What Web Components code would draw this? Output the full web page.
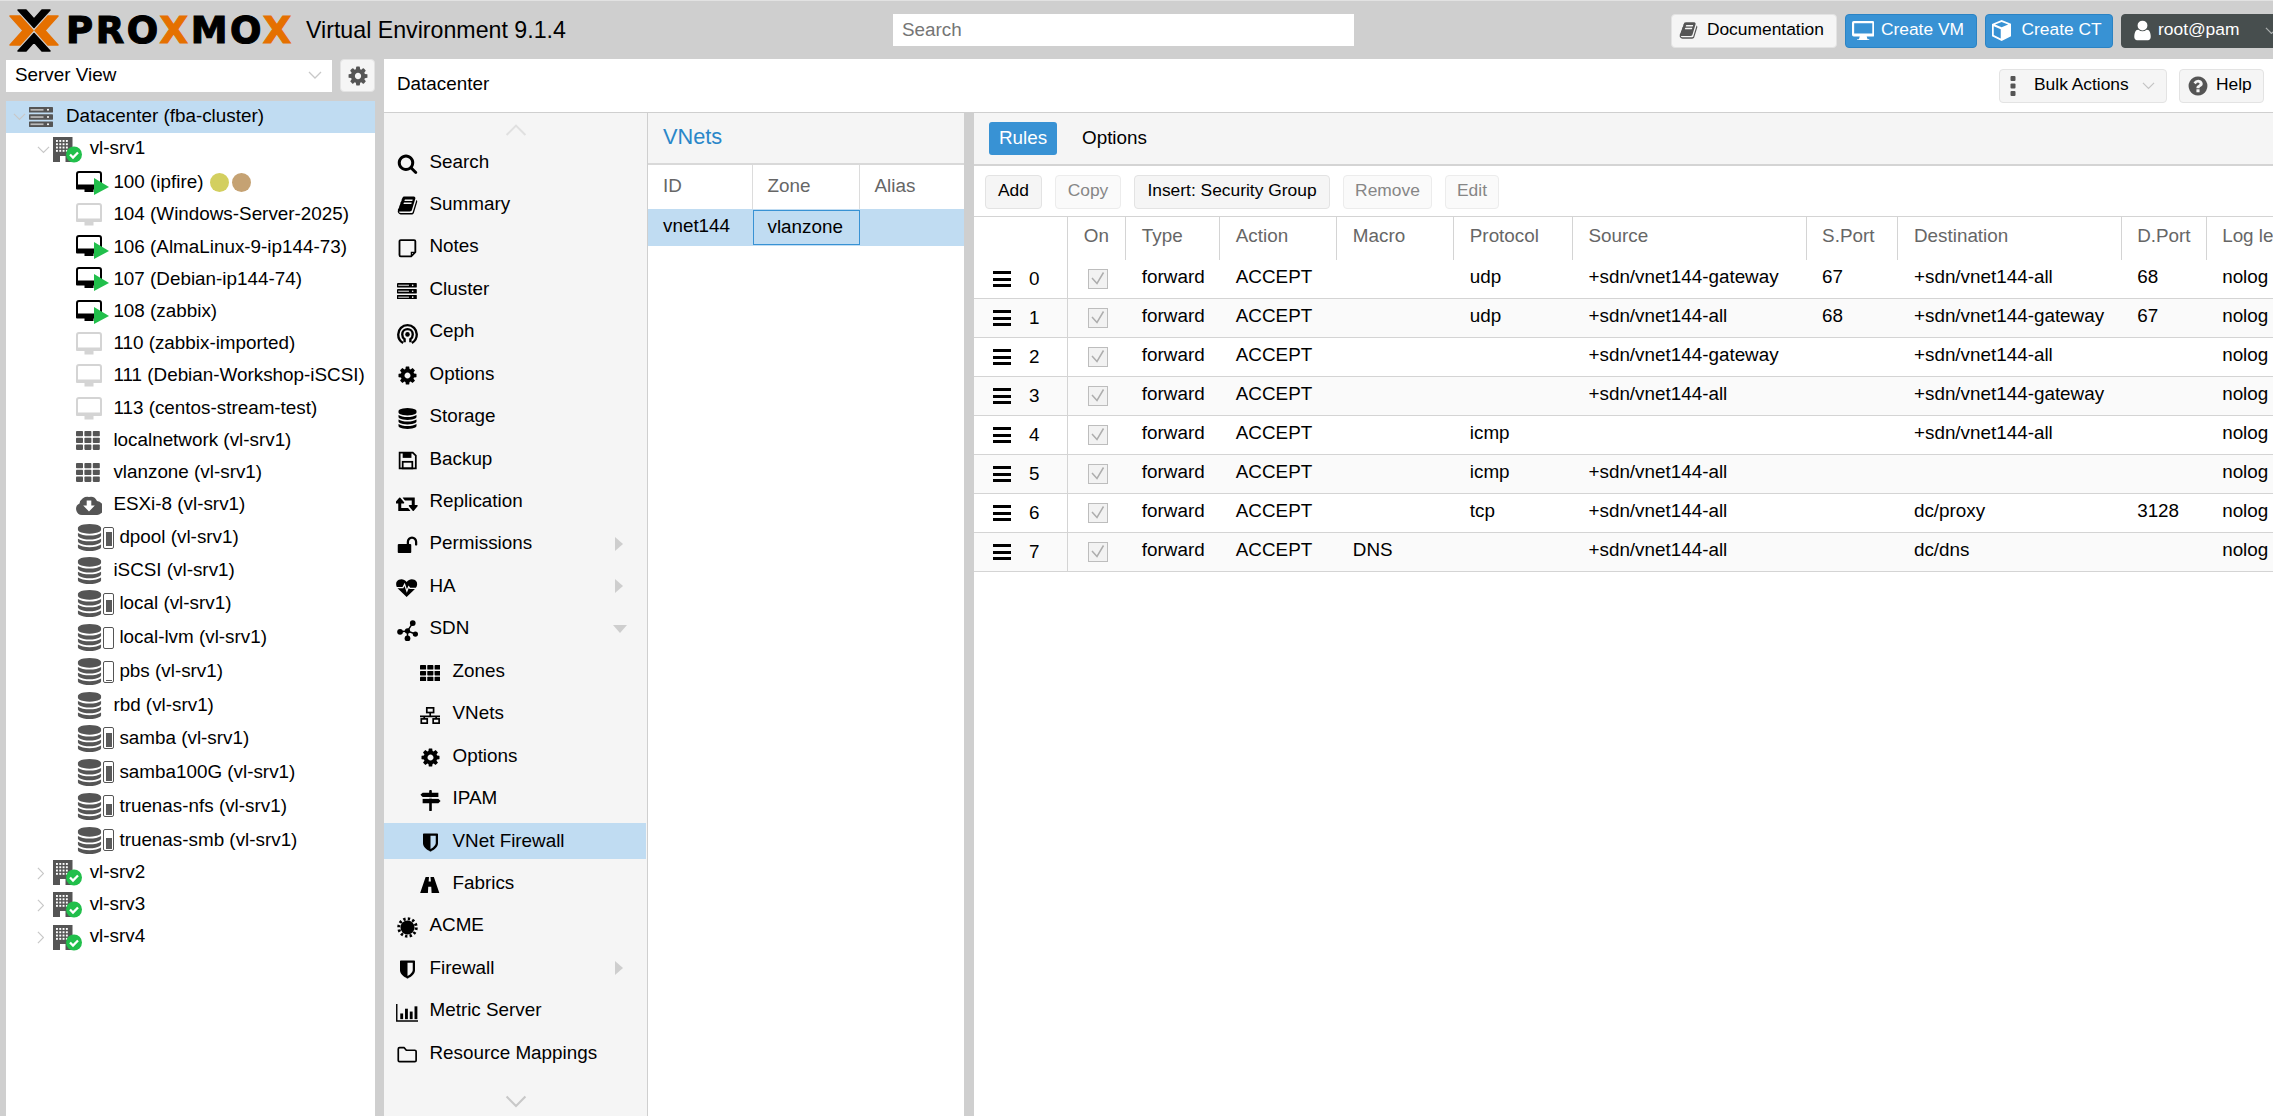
<!DOCTYPE html>
<html>
<head>
<meta charset="utf-8">
<title>Proxmox Virtual Environment</title>
<style>
  html, body { margin: 0; height: 100%; overflow: hidden; }
  body { font: 18.85px "Liberation Sans", Arial, sans-serif; color: #000; background: #cfcfcf; }
</style>
</head>
<body>
<px-app>
  <px-topbar slot="top">
    <px-button icon="book" icon-color="#555" style="--w:165.5px;--pl:6.5px;--ib:28.4px;--ih:19px">Documentation</px-button>
    <px-button variant="primary" icon="desktop" style="--w:132px;--pl:6px;--ib:29.4px;--ih:19px">Create VM</px-button>
    <px-button variant="primary" icon="cube" style="--w:128.5px;--pl:6px;--ib:30px;--ih:21px">Create CT</px-button>
    <px-button variant="dark" icon="user" menu style="--w:160px;--pl:8.5px;--ib:27.5px;--ih:23px;--mr:10px">root@pam</px-button>
  </px-topbar>

  <px-sidebar slot="left">
    <px-tree-row slot="tree" selected level="0" icon="datacenter" expander="open">Datacenter (fba-cluster)</px-tree-row>
    <px-tree-row slot="tree" level="1" icon="node" expander="open" style="--h:33.5px">vl-srv1</px-tree-row>
    <px-tree-row slot="tree" level="2" icon="vm-on" tags="#d3cf5f,#c5a273">100 (ipfire)</px-tree-row>
    <px-tree-row slot="tree" level="2" icon="vm-off">104 (Windows-Server-2025)</px-tree-row>
    <px-tree-row slot="tree" level="2" icon="vm-on">106 (AlmaLinux-9-ip144-73)</px-tree-row>
    <px-tree-row slot="tree" level="2" icon="vm-on">107 (Debian-ip144-74)</px-tree-row>
    <px-tree-row slot="tree" level="2" icon="vm-on">108 (zabbix)</px-tree-row>
    <px-tree-row slot="tree" level="2" icon="vm-off">110 (zabbix-imported)</px-tree-row>
    <px-tree-row slot="tree" level="2" icon="vm-off">111 (Debian-Workshop-iSCSI)</px-tree-row>
    <px-tree-row slot="tree" level="2" icon="vm-off">113 (centos-stream-test)</px-tree-row>
    <px-tree-row slot="tree" level="2" icon="th" icon-color="#555">localnetwork (vl-srv1)</px-tree-row>
    <px-tree-row slot="tree" level="2" icon="th" icon-color="#555">vlanzone (vl-srv1)</px-tree-row>
    <px-tree-row slot="tree" level="2" icon="cloud-download" icon-color="#555">ESXi-8 (vl-srv1)</px-tree-row>
    <px-tree-row slot="tree" level="2" icon="database" usage="0.82">dpool (vl-srv1)</px-tree-row>
    <px-tree-row slot="tree" level="2" icon="database">iSCSI (vl-srv1)</px-tree-row>
    <px-tree-row slot="tree" level="2" icon="database" usage="0.75">local (vl-srv1)</px-tree-row>
    <px-tree-row slot="tree" level="2" icon="database" usage="0">local-lvm (vl-srv1)</px-tree-row>
    <px-tree-row slot="tree" level="2" icon="database" usage="0.04">pbs (vl-srv1)</px-tree-row>
    <px-tree-row slot="tree" level="2" icon="database">rbd (vl-srv1)</px-tree-row>
    <px-tree-row slot="tree" level="2" icon="database" usage="0.82">samba (vl-srv1)</px-tree-row>
    <px-tree-row slot="tree" level="2" icon="database" usage="0.85">samba100G (vl-srv1)</px-tree-row>
    <px-tree-row slot="tree" level="2" icon="database" usage="0.6">truenas-nfs (vl-srv1)</px-tree-row>
    <px-tree-row slot="tree" level="2" icon="database" usage="0.6">truenas-smb (vl-srv1)</px-tree-row>
    <px-tree-row slot="tree" level="1" icon="node" expander="closed">vl-srv2</px-tree-row>
    <px-tree-row slot="tree" level="1" icon="node" expander="closed">vl-srv3</px-tree-row>
    <px-tree-row slot="tree" level="1" icon="node" expander="closed">vl-srv4</px-tree-row>
  </px-sidebar>

  <px-content slot="main">
    <px-button slot="actions" icon="ellipsis" icon-color="#555" menu style="--w:168.5px;--pl:10.5px;--ib:24px;--ih:20px;--mr:11px;--chev:#c4c4c4">Bulk Actions</px-button>
    <px-button slot="actions" icon="question" icon-color="#555" style="--w:85px;--pl:7px;--ib:29px;--ih:22px">Help</px-button>

    <px-nav slot="nav">
      <px-nav-item icon="search">Search</px-nav-item>
      <px-nav-item icon="book">Summary</px-nav-item>
      <px-nav-item icon="note">Notes</px-nav-item>
      <px-nav-item icon="server">Cluster</px-nav-item>
      <px-nav-item icon="ceph">Ceph</px-nav-item>
      <px-nav-item icon="gear">Options</px-nav-item>
      <px-nav-item icon="database">Storage</px-nav-item>
      <px-nav-item icon="floppy">Backup</px-nav-item>
      <px-nav-item icon="retweet">Replication</px-nav-item>
      <px-nav-item icon="unlock" arrow="right">Permissions</px-nav-item>
      <px-nav-item icon="heartbeat" arrow="right">HA</px-nav-item>
      <px-nav-item icon="sdn" arrow="down">SDN</px-nav-item>
      <px-nav-item sub icon="th">Zones</px-nav-item>
      <px-nav-item sub icon="sitemap">VNets</px-nav-item>
      <px-nav-item sub icon="gear">Options</px-nav-item>
      <px-nav-item sub icon="signs">IPAM</px-nav-item>
      <px-nav-item sub selected icon="shield">VNet Firewall</px-nav-item>
      <px-nav-item sub icon="road">Fabrics</px-nav-item>
      <px-nav-item icon="certificate">ACME</px-nav-item>
      <px-nav-item icon="shield" arrow="right">Firewall</px-nav-item>
      <px-nav-item icon="chart">Metric Server</px-nav-item>
      <px-nav-item icon="folder">Resource Mappings</px-nav-item>
    </px-nav>

    <px-vnet-panel slot="list"></px-vnet-panel>
    <px-rules-panel slot="detail"></px-rules-panel>
  </px-content>
</px-app>

<script>
const fa = d => ({ vb: "0 0 1792 1792", body: `<path fill="currentColor" d="${d}"/>` });
const ICONS = {
  gear: fa("M1152 896q0-106-75-181t-181-75-181 75-75 181 75 181 181 75 181-75 75-181zm512-109v222q0 12-8 23t-20 13l-185 28q-19 54-39 91 35 50 107 138 10 12 10 25t-9 23q-27 37-99 108t-94 71q-12 0-26-9l-138-108q-44 23-91 38-16 136-29 186-7 28-36 28h-222q-14 0-24.500-8.500t-11.500-21.500l-28-184q-49-16-90-37l-141 107q-10 9-25 9-14 0-25-11-126-114-165-168-7-10-7-23 0-12 8-23 15-21 51-66.500t54-70.500q-27-50-41-99l-183-27q-13-2-21-12.500t-8-23.500v-222q0-12 8-23t19-13l186-28q14-46 39-92-40-57-107-138-10-12-10-24 0-10 9-23 26-36 98.500-107.500t94.500-71.500q13 0 26 10l138 107q44-23 91-38 16-136 29-186 7-28 36-28h222q14 0 24.500 8.500t11.500 21.500l28 184q49 16 90 37l142-107q9-9 24-9 13 0 25 10 129 119 165 170 7 8 7 22 0 12-8 23-15 21-51 66.500t-54 70.500q26 50 41 98l183 28q13 2 21 12.500t8 23.500z"),
  search: fa("M1216 832q0-185-131.500-316.500t-316.500-131.500-316.500 131.500-131.500 316.500 131.500 316.500 316.500 131.500 316.500-131.500 131.500-316.500zm512 832q0 52-38 90t-90 38q-54 0-90-38l-343-342q-179 124-399 124-143 0-273.500-55.500t-225-150-150-225-55.500-273.500 55.500-273.500 150-225 225-150 273.500-55.500 273.500 55.500 225 150 150 225 55.500 273.500q0 220-124 399l343 343q37 37 37 90z"),
  database: fa("M896 768q237 0 443-43t325-127v170q0 69-103 128t-280 93.500-385 34.500-385-34.500-280-93.500-103-128v-170q119 84 325 127t443 43zm0 768q237 0 443-43t325-127v170q0 69-103 128t-280 93.500-385 34.500-385-34.500-280-93.500-103-128v-170q119 84 325 127t443 43zm0-384q237 0 443-43t325-127v170q0 69-103 128t-280 93.500-385 34.500-385-34.500-280-93.500-103-128v-170q119 84 325 127t443 43zm0-1152q208 0 385 34.500t280 93.500 103 128v128q0 69-103 128t-280 93.500-385 34.500-385-34.500-280-93.500-103-128v-128q0-69 103-128t280-93.500 385-34.500z"),
  user: fa("M1536 1399q0 109-62.500 187t-150.500 78h-854q-88 0-150.500-78t-62.500-187q0-85 8.500-160.500t31.500-152 58.500-131 94-89 134.500-34.500q131 128 313 128t313-128q76 0 134.500 34.500t94 89 58.500 131 31.500 152 8.500 160.500zm-256-887q0 159-112.500 271.500t-271.500 112.500-271.500-112.500-112.500-271.500 112.500-271.500 271.500-112.500 271.500 112.500 112.500 271.500z"),
  question: fa("M1024 1376v-192q0-14-9-23t-23-9h-192q-14 0-23 9t-9 23v192q0 14 9 23t23 9h192q14 0 23-9t9-23zm256-672q0-88-55.500-163t-138.500-116-170-41q-243 0-371 213-15 24 8 42l132 100q7 6 19 6 16 0 25-12 53-68 86-92 34-24 86-24 48 0 85.500 26t37.500 59q0 38-20 61t-68 45q-63 28-115.500 86.500t-52.500 125.500v36q0 14 9 23t23 9h192q14 0 23-9t9-23q0-19 21.500-49.500t54.500-49.500q32-18 49-28.500t46-35 44.500-48 28-60.500 12.500-81zm384 192q0 209-103 385.500t-279.500 279.500-385.500 103-385.500-103-279.500-279.500-103-385.500 103-385.500 279.500-279.500 385.500-103 385.500 103 279.500 279.500 103 385.500z"),
  book: fa("M1703 478q40 57 18 129l-275 906q-19 64-76.500 107.500t-122.500 43.500h-923q-77 0-148.500-53.500t-99.500-131.500q-24-67-2-127 0-4 3-27t4-37q1-8-3-21.500t-3-19.500q2-11 8-21t16.500-23.500 16.500-23.500q23-38 45-91.500t30-91.500q3-10 .5-30t-.5-28q3-11 17-28t17-23q21-36 42-92t25-90q1-9-2.500-32t.5-28q4-13 22-30.500t22-22.500q19-26 42.500-84.500t27.500-96.500q1-8-3-25.500t-2-26.500q2-8 9-18t18-23 17-21q8-12 16.500-30.500t15-35 16-36 19.500-32 26.500-23.500 36-11.500 47.500 5.500l-1 3q38-9 51-9h761q74 0 114 56t18 130l-274 906q-36 119-71.500 153.500t-128.500 34.500h-869q-27 0-38 15-11 16-1 43 24 70 144 70h923q29 0 56-15.500t35-41.500l300-987q7-22 5-57 38 15 59 43zm-1064 2q-4 13 2 22.500t20 9.500h608q13 0 25.500-9.500t16.500-22.500l21-64q4-13-2-22.500t-20-9.500h-608q-13 0-25.500 9.500t-16.500 22.500zm-83 256q-4 13 2 22.500t20 9.500h608q13 0 25.500-9.500t16.500-22.500l21-64q4-13-2-22.500t-20-9.500h-608q-13 0-25.500 9.500t-16.500 22.500z"),
  shield: fa("M1344 960v-640h-448v1137q119-63 213-137 235-184 235-360zm192-768v768q0 86-33.500 170.500t-83 150-118 127.500-126.500 103-121 77.500-89.500 49.500-42.500 20q-12 6-26 6t-26-6q-16-7-42.500-20t-89.500-49.500-121-77.500-126.500-103-118-127.500-83-150-33.500-170.500v-768q0-26 19-45t45-19h1152q26 0 45 19t19 45z"),
  unlock: fa("M1728 576v256q0 26-19 45t-45 19h-64q-26 0-45-19t-19-45v-256q0-106-75-181t-181-75-181 75-75 181v192h96q40 0 68 28t28 68v576q0 40-28 68t-68 28h-960q-40 0-68-28t-28-68v-576q0-40 28-68t68-28h672v-192q0-185 131.500-316.500t316.500-131.500 316.500 131.500 131.500 316.500z"),
  retweet: { vb: "0 0 1920 1792", body: `<path fill="currentColor" d="M1216 1504q0 13-9.500 22.500t-22.500 9.500h-960q-8 0-13.500-2t-9-7-5.500-8-3-11.500-1-11.500v-600h-192q-26 0-45-19t-19-45q0-24 15-41l320-384q19-22 49-22t49 22l320 384q15 17 15 41 0 26-19 45t-45 19h-192v384h576q16 0 25 11l160 192q7 10 7 21zm640-416q0 24-15 41l-320 384q-20 23-49 23t-49-23l-320-384q-15-17-15-41 0-26 19-45t45-19h192v-384h-576q-16 0-25-12l-160-192q-7-9-7-20 0-13 9.500-22.500t22.500-9.500h960q8 0 13.500 2t9 7 5.500 8 3 11.500 1 11.500v600h192q26 0 45 19t19 45z"/>` },
  desktop: { vb: "0 0 26 22", body: `<path fill="currentColor" fill-rule="evenodd" d="M2 0h22a2 2 0 0 1 2 2v14a2 2 0 0 1-2 2h-7l1 3h2v1H6v-1h2l1-3H2a2 2 0 0 1-2-2V2a2 2 0 0 1 2-2zm.5 2.500v12h21v-12z"/>` },
  cube: { vb: "0 0 22 24", body: `<path fill="currentColor" fill-rule="evenodd" d="M11 0l11 4.500v14L11 24 0 18.500v-14zM3.500 5L11 8.200 18.500 5 11 2.200zM2 7v10l8 4V10.500z"/>` },
  ellipsis: { vb: "0 0 6 20", body: `<rect x="0.500" width="5" height="5" rx="1" fill="currentColor"/><rect x="0.500" y="7.500" width="5" height="5" rx="1" fill="currentColor"/><rect x="0.500" y="15" width="5" height="5" rx="1" fill="currentColor"/>` },
  note: { vb: "0 0 24 24", body: `<path fill="none" stroke="currentColor" stroke-width="2.200" stroke-linejoin="round" d="M4.500 2.500h16a1.500 1.500 0 0 1 1.500 1.500v13l-5 5H4.500A1.500 1.500 0 0 1 3 20.500V4a1.500 1.500 0 0 1 1.500-1.500z"/><path fill="currentColor" d="M22 16.500h-5.500V22h1.500v-4h4z"/>` },
  server: { vb: "0 0 24 20", body: `<g fill="currentColor"><rect y="0" width="24" height="5.500" rx=".6"/><rect y="7.200" width="24" height="5.500" rx=".6"/><rect y="14.400" width="24" height="5.500" rx=".6"/></g><g fill="#aaa"><rect x="1.500" y="2" width="13" height="1.700"/><rect x="1.500" y="9.200" width="13" height="1.700"/><rect x="1.500" y="16.400" width="13" height="1.700"/></g><g fill="#fff"><circle cx="19" cy="2.800" r="1"/><circle cx="19" cy="10" r="1"/><circle cx="19" cy="17.200" r="1"/></g>` },
  ceph: { vb: "0 0 24 24", body: `<g fill="none" stroke="currentColor" stroke-width="2.700"><path d="M7 22.800C3.500 20.800 1.400 17 1.400 13a10.600 10.600 0 0 1 21.200 0c0 4-2.100 7.800-5.600 9.800"/><path d="M8.700 22v-3.500C6.700 17 6 15 6 13a6 6 0 0 1 12 0c0 2-.7 4-2.700 5.500V22"/></g><circle cx="12" cy="13" r="2.600" fill="currentColor"/>` },
  floppy: { vb: "0 0 24 24", body: `<path fill="none" stroke="currentColor" stroke-width="2" d="M3 3h15l3.500 3.500V21H3z"/><rect x="6.500" y="3" width="10" height="6" fill="currentColor"/><rect x="6.500" y="13.500" width="11" height="7.500" fill="none" stroke="currentColor" stroke-width="2"/>` },
  heartbeat: { vb: "0 0 26 22", body: `<path fill="currentColor" d="M13 22L2.500 12C-1 8-.5 2.500 3.500 1 7-.5 10.500.5 13 3.800 15.500.5 19-.5 22.500 1c4 1.500 4.500 7 1 11z"/><path fill="none" stroke="#f5f5f5" stroke-width="1.600" d="M0 10.500h8.500l2-4 2.800 8 2.200-5 1.500 2H26"/>` },
  sdn: { vb: "0 0 24 24", body: `<g fill="currentColor"><circle cx="18" cy="3.500" r="3.300"/><circle cx="3.500" cy="13.500" r="3.300"/><circle cx="12" cy="12.500" r="3"/><circle cx="21" cy="16" r="3"/><circle cx="12" cy="21" r="3.300"/></g><path fill="none" stroke="currentColor" stroke-width="1.700" d="M18 3.500L12 12.500M3.500 13.500L12 12.500l9 3.500M12 12.500v8.500"/>` },
  sitemap: { vb: "0 0 24 20", body: `<g fill="none" stroke="currentColor" stroke-width="2"><rect x="8" y="1" width="8" height="5.500"/><rect x="1.500" y="14" width="7" height="5"/><rect x="15.500" y="14" width="7" height="5"/></g><path fill="none" stroke="currentColor" stroke-width="2" d="M12 6.500v4.500M0 11h24M5 11v3M19 11v3"/>` },
  signs: { vb: "0 0 24 24", body: `<g fill="currentColor"><rect x="10.500" y="0" width="3" height="24" rx="1"/><path d="M3 3h18v5H3L0.500 5.500z"/><path d="M3 10.500h18l2.500 2.500L21 15.500H3z" transform="translate(0 -.5)"/></g><g fill="#f5f5f5"><rect x="0" y="8.200" width="24" height="1.600"/></g>` },
  road: { vb: "0 0 26 22", body: `<path fill="currentColor" d="M7.500 0h4.500l-.5 6h3L14 0h4.500L26 22H15.500l-.5-9h-4l-.5 9H0z"/>` },
  certificate: { vb: "0 0 24 24", body: `<circle cx="12" cy="12" r="8" fill="currentColor"/><circle cx="12" cy="12" r="10" fill="none" stroke="currentColor" stroke-width="3.400" stroke-dasharray="2.700 2.540"/>` },
  chart: { vb: "0 0 24 20", body: `<path fill="none" stroke="currentColor" stroke-width="1.500" d="M.8 1v18h23"/><g fill="currentColor"><rect x="4.500" y="11" width="3" height="6"/><rect x="9.500" y="6" width="3" height="11"/><rect x="14.500" y="9" width="3" height="8"/><rect x="19.500" y="3.500" width="3" height="13.500"/></g>` },
  folder: { vb: "0 0 24 20", body: `<path fill="none" stroke="currentColor" stroke-width="2" stroke-linejoin="round" d="M1.500 17V3.500A1.500 1.500 0 0 1 3 2h5.500l2.500 3h10a1.500 1.500 0 0 1 1.500 1.500V17a1.500 1.500 0 0 1-1.500 1.500H3A1.500 1.500 0 0 1 1.500 17z"/>` },
  th: { vb: "0 0 24 19", body: `<g fill="currentColor">${[0,1,2].map(r => [0,1,2].map(c => `<rect x="${c*8.4}" y="${r*6.8}" width="7" height="5.300" rx=".8"/>`).join("")).join("")}</g>` },
  "cloud-download": { vb: "0 0 26 21", body: `<path fill="currentColor" d="M6 21a6 6 0 0 1-2.500-11.400A8 8 0 0 1 13 3a7 7 0 0 1 8 4 7 7 0 0 1-1 14z"/><path fill="#fff" d="M10.700 6.500h4.600v5h3.500L13 17.500l-5.800-6h3.500z"/>` },
  datacenter: { vb: "0 0 24 20", body: `<g fill="#555"><rect y="0" width="24" height="5.500" rx=".6"/><rect y="7.200" width="24" height="5.500" rx=".6"/><rect y="14.400" width="24" height="5.500" rx=".6"/></g><g fill="#bbb"><rect x="1.500" y="2" width="13" height="1.700"/><rect x="1.500" y="9.200" width="13" height="1.700"/><rect x="1.500" y="16.400" width="13" height="1.700"/></g><g fill="#fff"><circle cx="19" cy="2.800" r="1"/><circle cx="19" cy="10" r="1"/><circle cx="19" cy="17.200" r="1"/></g>` },
  node: { vb: "0 0 29 26", body: `<rect x="0" y="0" width="19.500" height="25" fill="#555"/>${[0,1,2,3].map(r => [0,1,2,3].map(c => `<rect x="${3+c*3.3}" y="${3+r*3.3}" width="1.900" height="1.900" fill="#fff"/>`).join("")).join("")}<rect x="7" y="19" width="5.500" height="6" fill="#fff"/><circle cx="21" cy="17.500" r="8" fill="#21bf4b"/><path fill="none" stroke="#fff" stroke-width="2.300" d="M17 17.500l3 3 5-5"/>` },
  "vm-on": { vb: "0 0 33 24", body: `<rect x="1" y="1" width="24" height="16" rx="2" fill="#fff" stroke="#000" stroke-width="2"/><rect x="0" y="13.500" width="26" height="5" rx="1" fill="#000"/><rect x="8.500" y="18" width="9" height="3" fill="#000"/><path fill="#21bf4b" d="M18 7l15 9-15 8z"/>` },
  "vm-off": { vb: "0 0 26 23", body: `<rect x="1" y="1" width="24" height="17" rx="2" fill="#fff" stroke="#d4d4d4" stroke-width="2"/><rect x="0" y="15.500" width="26" height="3.500" rx="1" fill="#d4d4d4"/><rect x="8.500" y="19" width="9" height="3.500" fill="#d4d4d4"/>` },
};
const ICON_SIZE = {
  "vm-on": [33, 24], "vm-off": [26, 23], node: [29, 26], datacenter: [24, 20], database: [27, 27],
  th: [24, 19], "cloud-download": [26, 21],
};

// one inline svg, scaled by the height attribute
class PxIcon extends HTMLElement {
  connectedCallback() {
    if (this.shadowRoot) return;
    const ic = ICONS[this.getAttribute("name")];
    const h = this.getAttribute("height") || "20";
    this.attachShadow({ mode: "open" }).innerHTML = `
      <style>
        :host { display: inline-flex; line-height: 0; flex: none; }
        svg { display: block; }
      </style>
      <svg height="${h}" viewBox="${ic.vb}">${ic.body}</svg>`;
  }
}

class PxChevron extends HTMLElement {
  connectedCallback() {
    if (this.shadowRoot) return;
    const dir = this.getAttribute("dir") || "down";
    const w = this.getAttribute("w") || "13";
    const paths = { down: "M1 1l6 6 6-6", up: "M1 7l6-6 6 6", right: "M1 1l6 6-6 6" };
    const vb = dir === "right" ? "0 0 8 14" : "0 0 14 8";
    const size = dir === "right" ? `width="${w * 8 / 14}" height="${w}"` : `width="${w}" height="${w * 8 / 14}"`;
    this.attachShadow({ mode: "open" }).innerHTML = `
      <style>:host { display: inline-flex; line-height: 0; color: #c8c8c8; }</style>
      <svg ${size} viewBox="${vb}"><path fill="none" stroke="currentColor" stroke-width="1.300" d="${paths[dir]}"/></svg>`;
  }
}

class PxApp extends HTMLElement {
  constructor() {
    super();
    this.attachShadow({ mode: "open" }).innerHTML = `
      <style>
        :host { display: flex; flex-direction: column; height: 100vh; overflow: hidden; }
        .main { flex: 1; display: flex; min-height: 0; }
      </style>
      <slot name="top"></slot>
      <div class="main">
        <slot name="left"></slot>
        <slot name="main"></slot>
      </div>`;
  }
}

class PxTopbar extends HTMLElement {
  constructor() {
    super();
    this.attachShadow({ mode: "open" }).innerHTML = `
      <style>
        :host { display: flex; align-items: center; height: 58px; flex: none; overflow: hidden;
                border-top: 1px solid #e2e2e2; background: #cfcfcf; }
        .logo { display: flex; align-items: center; margin-left: 9px; flex: none; }
        .word { margin-left: 7px; width: 229px; font: bold 37px/1 "DejaVu Sans", sans-serif; letter-spacing: 2.6px;
                color: #000; -webkit-text-stroke: 1.1px #000; white-space: nowrap; }
        .word b { font-weight: inherit; color: #e57000; -webkit-text-stroke-color: #e57000; }
        .title { margin-left: 11px; font-size: 23.2px; flex: none; white-space: nowrap; }
        .search { margin-left: 327px; width: 452px; height: 32px; line-height: 32px; padding-left: 9px;
                  background: #fff; color: #757575; flex: none; }
        .tools { margin-left: auto; margin-top: 1px; display: flex; gap: 8px; flex: none; width: 602px; }
      </style>
      <div class="logo">
        <svg width="50" height="43" viewBox="0 0 50 43">
          <g fill="#e57000" stroke="#e57000" stroke-width="1.500" stroke-linejoin="round">
            <path d="M1 7h10l13 14.500L11 36H1l13-14.500z"/>
            <path d="M49 7H39L26 21.500 39 36h10L36 21.500z"/>
          </g>
          <g fill="#000" stroke="#000" stroke-width="1.500" stroke-linejoin="round">
            <path d="M9 1h8l8 9 8-9h8L25 18.500z"/>
            <path d="M9 42h8l8-9 8 9h8L25 24.500z"/>
          </g>
        </svg>
        <div class="word">PRO<b>X</b>MO<b>X</b></div>
      </div>
      <div class="title">Virtual Environment 9.1.4</div>
      <div class="search">Search</div>
      <div class="tools"><slot></slot></div>`;
  }
}

class PxButton extends HTMLElement {
  connectedCallback() {
    if (this.shadowRoot) return;
    const icon = this.getAttribute("icon");
    const color = this.getAttribute("icon-color") || "currentColor";
    const ih = getComputedStyle(this).getPropertyValue("--ih").trim() || "20px";
    this.attachShadow({ mode: "open" }).innerHTML = `
      <style>
        :host { display: inline-flex; align-items: center; box-sizing: border-box; flex: none;
                width: var(--w, auto); height: 34px; padding: 0 var(--pr, 0px) 0 var(--pl, 0px);
                font-size: 17.4px; white-space: nowrap; border-radius: 4px;
                background: #f5f5f5; border: 1px solid #e3e3e3; color: #000; }
        :host(:not([icon])) { justify-content: center; }
        :host([variant="primary"]) { background: #3892d4; border-color: #2a83c4; color: #fff; }
        :host([variant="dark"]) { background: #474e4e; border-color: #474e4e; color: #fff; }
        :host([variant="disabled"]) { background: #fafafa; border-color: #ececec; color: #868686; }
        .ib { display: inline-flex; width: var(--ib, 0); flex: none; color: ${color}; }
        .label { position: relative; top: -1.500px; }
        .chev { margin-left: auto; margin-right: var(--mr, 0px); color: var(--chev, #a9adad); display: inline-flex; }
        :host([variant="dark"]) .chev { margin-right: 2px; }
      </style>
      ${icon ? `<span class="ib"><px-icon name="${icon}" height="${parseFloat(ih)}"></px-icon></span>` : ""}
      <span class="label"><slot></slot></span>
      ${this.hasAttribute("menu") ? `<span class="chev"><px-chevron dir="down" style="color:inherit"></px-chevron></span>` : ""}`;
  }
}

class PxSidebar extends HTMLElement {
  constructor() {
    super();
    this.attachShadow({ mode: "open" }).innerHTML = `
      <style>
        :host { display: flex; flex-direction: column; width: 369px; margin: 0 9px 0 6px; flex: none; }
        .head { display: flex; justify-content: space-between; height: 33px; padding-top: 1px; }
        .combo { display: flex; align-items: center; justify-content: space-between; box-sizing: border-box;
                 width: 326px; height: 32px; padding: 0 10px 2px 9px; background: #fff; }
        .gear { box-sizing: border-box; width: 35px; height: 33px; margin-top: -1px; display: flex; align-items: center;
                justify-content: center; background: #f5f5f5; border: 1px solid #e3e3e3; border-radius: 4px; color: #555; }
        .tree { flex: 1; margin-top: 8px; background: #fff; overflow: hidden; }
      </style>
      <div class="head">
        <div class="combo">Server View<px-chevron dir="down" w="14"></px-chevron></div>
        <div class="gear"><px-icon name="gear" height="22"></px-icon></div>
      </div>
      <div class="tree"><slot name="tree"></slot></div>`;
  }
}

class PxTreeRow extends HTMLElement {
  connectedCallback() {
    if (this.shadowRoot) return;
    const level = +this.getAttribute("level");
    const name = this.getAttribute("icon");
    const exp = this.getAttribute("expander");
    const usage = this.getAttribute("usage");
    const tags = (this.getAttribute("tags") || "").split(",").filter(Boolean);
    const iconColor = this.getAttribute("icon-color") || "#555";
    const h = (ICON_SIZE[name] || [0, 20])[1];
    const chev = exp === "open" ? `<px-chevron dir="down" w="13"></px-chevron>`
      : exp === "closed" ? `<px-chevron dir="right" w="13"></px-chevron>` : "";
    this.attachShadow({ mode: "open" }).innerHTML = `
      <style>
        :host { display: flex; align-items: center; box-sizing: border-box; height: var(--h, ${usage !== null ? 34 : 32.2}px);
                padding-left: ${7 + level * 23.7}px; white-space: nowrap; }
        :host([selected]) { background: #c0dcf2; }
        .exp { width: 16px; flex: none; display: inline-flex; align-items: center; }
        .ic { width: ${usage !== null ? 43 : 37}px; flex: none; display: inline-flex; align-items: center; color: ${iconColor}; }
        .bat { box-sizing: border-box; width: 11px; height: 22px; flex: none; display: flex; align-items: flex-end;
               padding: 1.500px; border: 1px solid #555; border-radius: 2px; background: #fff; }
        .bat i { display: block; width: 100%; background: #5a5a5a; }
        .label { position: relative; top: ${level === 2 ? -0.5 : -1.5}px; }
        .tag { width: 19px; height: 19px; border-radius: 50%; margin-left: 3px; flex: none; }
        .label + .tag { margin-left: 7px; }
      </style>
      <span class="exp">${chev}</span>
      <span class="ic"><px-icon name="${name}" height="${h}"></px-icon>${usage !== null ? `<span class="bat"><i style="height:${usage * 100}%"></i></span>` : ""}</span>
      <span class="label"><slot></slot></span>
      ${tags.map(t => `<span class="tag" style="background:${t}"></span>`).join("")}`;
  }
}

class PxContent extends HTMLElement {
  constructor() {
    super();
    this.attachShadow({ mode: "open" }).innerHTML = `
      <style>
        :host { display: flex; flex-direction: column; flex: 1; min-width: 0; background: #fff; }
        .head { display: flex; align-items: center; justify-content: space-between; box-sizing: border-box; height: 54px;
                padding: 0 9px 0 13px; border-bottom: 1px solid #cfcfcf; flex: none; }
        .crumb { padding-bottom: 3px; }
        .actions { display: flex; gap: 12px; margin-top: 1px; }
        .body { flex: 1; display: flex; min-height: 0; }
        .split { width: 10px; background: #cfcfcf; flex: none; }
      </style>
      <div class="head">
        <div class="crumb">Datacenter</div>
        <div class="actions"><slot name="actions"></slot></div>
      </div>
      <div class="body">
        <slot name="nav"></slot>
        <slot name="list"></slot>
        <div class="split"></div>
        <slot name="detail"></slot>
      </div>`;
  }
}

class PxNav extends HTMLElement {
  constructor() {
    super();
    this.attachShadow({ mode: "open" }).innerHTML = `
      <style>
        :host { display: flex; flex-direction: column; box-sizing: content-box; width: 263px; flex: none;
                background: #f5f5f5; border-right: 1px solid #cfcfcf; overflow: hidden; }
        .up, .down { display: flex; justify-content: center; flex: none; }
        .up { height: 31px; padding-top: 11px; box-sizing: border-box; }
        .items { display: flex; flex-direction: column; gap: 6.450px; }
        .down { margin-top: auto; padding-bottom: 8px; }
      </style>
      <div class="up"><px-chevron dir="up" w="22" style="color:#e0e0e0"></px-chevron></div>
      <div class="items"><slot></slot></div>
      <div class="down"><px-chevron dir="down" w="22"></px-chevron></div>`;
  }
}

class PxNavItem extends HTMLElement {
  connectedCallback() {
    if (this.shadowRoot) return;
    const icon = this.getAttribute("icon");
    const arrow = this.getAttribute("arrow");
    const h = { th: 16.500, sitemap: 17, server: 16.500, chart: 19, heartbeat: 18, road: 16.500, folder: 17, signs: 21, note: 20 }[icon] || 21;
    this.attachShadow({ mode: "open" }).innerHTML = `
      <style>
        :host { display: flex; align-items: center; height: 36px; padding-left: 13px; white-space: nowrap; position: relative; }
        :host([sub]) { padding-left: 36px; }
        :host([selected]) { background: #c0dcf2; margin-right: 1px; }
        .ic { width: 32.500px; flex: none; position: relative; top: 1.500px; }
        .box { width: 20px; display: flex; justify-content: center; }
        .label { position: relative; top: -.5px; }
        .arr { position: absolute; right: 24px; width: 0; height: 0; }
        .right { border-left: 8px solid #cecece; border-top: 7px solid transparent; border-bottom: 7px solid transparent; }
        .down { right: 20px; border-top: 8px solid #cecece; border-left: 7px solid transparent; border-right: 7px solid transparent; }
      </style>
      <span class="ic"><span class="box"><px-icon name="${icon}" height="${h}"></px-icon></span></span>
      <span class="label"><slot></slot></span>
      ${arrow ? `<span class="arr ${arrow}"></span>` : ""}`;
  }
}

class PxVnetPanel extends HTMLElement {
  constructor() {
    super();
    this.attachShadow({ mode: "open" }).innerHTML = `
      <style>
        :host { display: flex; flex-direction: column; width: 316px; flex: none; background: #fff; }
        .title { height: 52px; line-height: 48px; box-sizing: border-box; padding-left: 15px; font-size: 21.75px; color: #2a87c9;
                 background: #f5f5f5; border-bottom: 2px solid #d9d9d9; flex: none; }
        .row { display: grid; grid-template-columns: 104.500px 107px 1fr; }
        .head { height: 44px; line-height: 42px; color: #666; }
        .head div { padding-left: 15px; border-right: 1px solid #dcdcdc; }
        .head div:last-child { border-right: 0; }
        .sel { height: 37px; background: #c0dcf2; }
        .sel div { padding-left: 15px; line-height: 34px; box-sizing: border-box; }
        .sel .focus { border: 1.500px solid #3892d4; padding-left: 14px; line-height: 31px; margin-top: 1px; height: 35px; }
      </style>
      <div class="title">VNets</div>
      <div class="row head"><div>ID</div><div>Zone</div><div>Alias</div></div>
      <div class="row sel"><div>vnet144</div><div class="focus">vlanzone</div><div></div></div>`;
  }
}

class PxRulesPanel extends HTMLElement {
  constructor() {
    super();
    this.attachShadow({ mode: "open" }).innerHTML = `
      <style>
        :host { display: flex; flex-direction: column; flex: 1; min-width: 0; overflow: hidden; background: #fff; }
        .tabs { display: flex; align-items: flex-start; box-sizing: border-box; height: 53px; padding: 9px 0 0 15px; gap: 25px;
                background: #f5f5f5; border-bottom: 2px solid #d4d4d4; flex: none; }
        .tab { height: 33px; line-height: 31px; padding: 0 10px; }
        .tab.on { background: #3892d4; color: #fff; border-radius: 3px; width: 68px; box-sizing: border-box; text-align: center; padding: 0; }
        .tab:not(.on) { padding-left: 0; }
        .bar { display: flex; gap: 13px; box-sizing: border-box; height: 50px; padding: 9px 0 0 11px; flex: none; }
      </style>
      <div class="tabs"><div class="tab on">Rules</div><div class="tab">Options</div></div>
      <div class="bar">
        <px-button style="--w:57px">Add</px-button>
        <px-button variant="disabled" style="--w:66px">Copy</px-button>
        <px-button style="--w:196px">Insert: Security Group</px-button>
        <px-button variant="disabled" style="--w:89px">Remove</px-button>
        <px-button variant="disabled" style="--w:54px">Edit</px-button>
      </div>
      <px-rule-grid></px-rule-grid>`;
  }
}

const RULES = [
  ["", "udp", "+sdn/vnet144-gateway", "67", "+sdn/vnet144-all", "68"],
  ["", "udp", "+sdn/vnet144-all", "68", "+sdn/vnet144-gateway", "67"],
  ["", "", "+sdn/vnet144-gateway", "", "+sdn/vnet144-all", ""],
  ["", "", "+sdn/vnet144-all", "", "+sdn/vnet144-gateway", ""],
  ["", "icmp", "", "", "+sdn/vnet144-all", ""],
  ["", "icmp", "+sdn/vnet144-all", "", "", ""],
  ["", "tcp", "+sdn/vnet144-all", "", "dc/proxy", "3128"],
  ["DNS", "", "+sdn/vnet144-all", "", "dc/dns", ""],
];

class PxRuleGrid extends HTMLElement {
  constructor() {
    super();
    const cols = "grid-template-columns: 94.300px 58px 94px 117px 117px 118.700px 233.600px 91.900px 223.200px 85px 100px;";
    const heads = ["", "On", "Type", "Action", "Macro", "Protocol", "Source", "S.Port", "Destination", "D.Port", "Log level"];
    const rows = RULES.map((r, i) => `
      <div class="row${i % 2 ? " alt" : ""}" style="${cols}">
        <div class="c first"><span class="bars"><i></i><i></i><i></i></span><span class="num">${i}</span></div>
        <div class="c on"><span class="check"><svg width="17" height="17" viewBox="0 0 17 17"><path fill="none" stroke="#adadad" stroke-width="1.500" d="M3 8l5 5.500 6.500-11"/></svg></span></div>
        <div class="c">forward</div><div class="c">ACCEPT</div><div class="c">${r[0]}</div><div class="c">${r[1]}</div>
        <div class="c">${r[2]}</div><div class="c">${r[3]}</div><div class="c">${r[4]}</div><div class="c">${r[5]}</div>
        <div class="c">nolog</div>
      </div>`).join("");
    this.attachShadow({ mode: "open" }).innerHTML = `
      <style>
        :host { display: block; flex: 1; overflow: hidden; }
        .row { display: grid; width: max-content; height: 39px; box-sizing: border-box; border-bottom: 1.500px solid #d4d4d4; min-width: 1300px; }
        .row.alt { background: #fafafa; }
        .c { padding: 4.500px 0 0 15.500px; line-height: 24px; white-space: nowrap; overflow: hidden; }
        .first { display: flex; align-items: center; padding: 0; border-right: 1px solid #d4d4d4; box-sizing: border-box; }
        .bars { display: flex; flex-direction: column; gap: 3.600px; margin-left: 19px; }
        .bars i { display: block; width: 18px; height: 3px; background: #000; }
        .num { margin-left: 18px; }
        .on { display: flex; align-items: center; padding: 0 0 0 19.500px; }
        .check { display: block; box-sizing: border-box; width: 20px; height: 20px; background: #f2f2f2; border: 1.500px solid #bdbdbd; }
        .check svg { display: block; }
        .head { display: grid; width: max-content; height: 44px; box-sizing: border-box; border-top: 1.500px solid #d4d4d4; color: #666; }
        .head div { padding-left: 15.500px; line-height: 37px; border-right: 1px solid #d4d4d4; box-sizing: border-box; white-space: nowrap; overflow: hidden; }
      </style>
      <div class="head" style="${cols}">${heads.map(h => `<div>${h}</div>`).join("")}</div>
      ${rows}`;
  }
}

customElements.define("px-icon", PxIcon);
customElements.define("px-chevron", PxChevron);
customElements.define("px-app", PxApp);
customElements.define("px-topbar", PxTopbar);
customElements.define("px-button", PxButton);
customElements.define("px-sidebar", PxSidebar);
customElements.define("px-tree-row", PxTreeRow);
customElements.define("px-content", PxContent);
customElements.define("px-nav", PxNav);
customElements.define("px-nav-item", PxNavItem);
customElements.define("px-vnet-panel", PxVnetPanel);
customElements.define("px-rule-grid", PxRuleGrid);
customElements.define("px-rules-panel", PxRulesPanel);
</script>
</body>
</html>
